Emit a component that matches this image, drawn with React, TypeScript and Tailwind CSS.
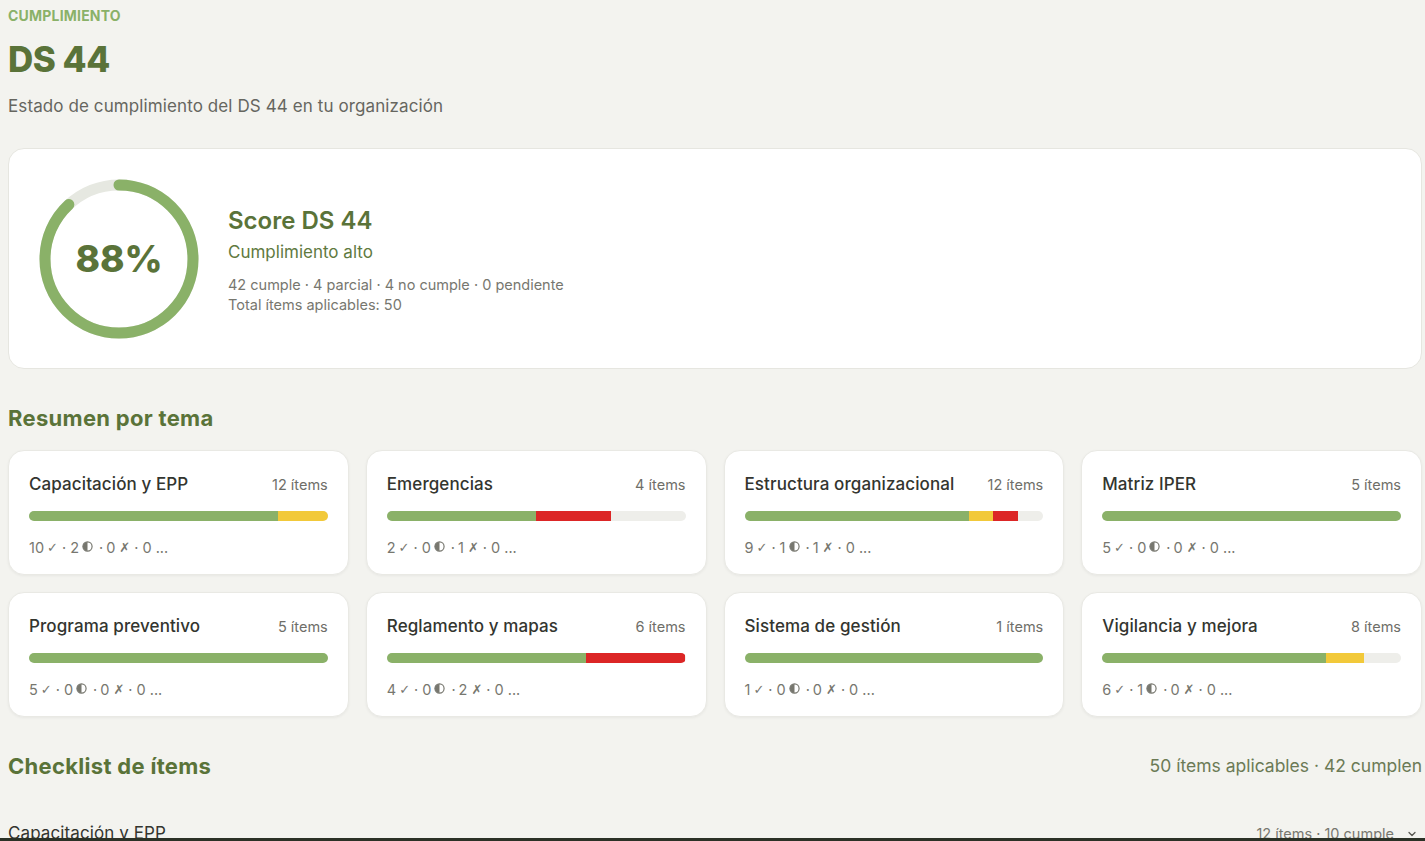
import React from "react";

type Topic = {
  name: string;
  items: number;
  ok: number;
  partial: number;
  no: number;
};

const topics: Topic[] = [
  { name: "Capacitación y EPP", items: 12, ok: 10, partial: 2, no: 0 },
  { name: "Emergencias", items: 4, ok: 2, partial: 0, no: 1 },
  { name: "Estructura organizacional", items: 12, ok: 9, partial: 1, no: 1 },
  { name: "Matriz IPER", items: 5, ok: 5, partial: 0, no: 0 },
  { name: "Programa preventivo", items: 5, ok: 5, partial: 0, no: 0 },
  { name: "Reglamento y mapas", items: 6, ok: 4, partial: 0, no: 2 },
  { name: "Sistema de gestión", items: 1, ok: 1, partial: 0, no: 0 },
  { name: "Vigilancia y mejora", items: 8, ok: 6, partial: 1, no: 0 },
];

function Ring() {
  const r = 74;
  const c = 2 * Math.PI * r;
  const pct = 0.88;
  return (
    <svg width="160" height="160" viewBox="0 0 160 160" className="shrink-0">
      <circle cx="80" cy="80" r={r} fill="none" stroke="#e6e8e1" strokeWidth="11" />
      <circle
        cx="80"
        cy="80"
        r={r}
        fill="none"
        stroke="#8ab168"
        strokeWidth="11"
        strokeLinecap="round"
        strokeDasharray={`${c * pct} ${c}`}
        transform="rotate(-90 80 80)"
      />
      <text
        x="80"
        y="93"
        textAnchor="middle"
        fontSize="37"
        fontWeight="800"
        fill="#5a7339"
        fontFamily="Inter, sans-serif"
      >
        88%
      </text>
    </svg>
  );
}

function HalfCircle() {
  return (
    <svg width="11" height="11" viewBox="0 0 12 12" className="inline-block mx-[3px] -mt-[2px] align-middle">
      <circle cx="6" cy="6" r="5" fill="none" stroke="#77776f" strokeWidth="1.3" />
      <path d="M6 1 A5 5 0 0 0 6 11 Z" fill="#77776f" />
    </svg>
  );
}

function TopicCard({ t }: { t: Topic }) {
  const w = (n: number) => `${(n / t.items) * 100}%`;
  return (
    <div className="bg-white rounded-[16px] border border-[#e9e9e4] shadow-[0_1px_3px_rgba(0,0,0,0.05)] h-[125px] px-[20px] pt-[20px]">
      <div className="flex items-center justify-between h-[26px] mt-[1px]">
        <span className="text-[17px] font-medium text-[#33352f] tracking-[0.1px]">{t.name}</span>
        <span className="text-[14.5px] text-[#6e6e68]">{t.items} ítems</span>
      </div>
      <div className="mt-[13px] h-[10px] rounded-full bg-[#eeeeea] flex overflow-hidden">
        <div className="h-full bg-[#8ab168]" style={{ width: w(t.ok) }} />
        <div className="h-full bg-[#f2c93a]" style={{ width: w(t.partial) }} />
        <div className="h-full bg-[#dc2626]" style={{ width: w(t.no) }} />
      </div>
      <div className="mt-[16px] text-[14.5px] text-[#77776f] flex items-center">
        <span>{t.ok}</span>
        <span className="ml-[3px]" style={{ fontFamily: "'DejaVu Sans', sans-serif", fontSize: "13px" }}>✓</span>
        <span className="mx-[4px]">·</span>
        <span>{t.partial}</span>
        <HalfCircle />
        <span className="mx-[3px]">·</span>
        <span>{t.no}</span>
        <span className="ml-[4px]" style={{ fontFamily: "'DejaVu Sans', sans-serif", fontSize: "13px" }}>✗</span>
        <span className="mx-[4px]">·</span>
        <span>0 ...</span>
      </div>
    </div>
  );
}

export default function App() {
  return (
    <div
      className="bg-[#f3f3ef] pl-[8px] pr-[3px] pt-[7px] overflow-hidden h-[841px]"
      style={{ fontFamily: "Inter, 'Open Sans', sans-serif" }}
    >
      <div className="text-[14px] font-bold text-[#8ab168] tracking-[0.2px] leading-[18px]">CUMPLIMIENTO</div>
      <h1 className="mt-[14px] text-[35px] font-extrabold text-[#5a7339] leading-[40px] tracking-[-0.5px]">DS 44</h1>
      <p className="mt-[15px] text-[17px] text-[#66665f] leading-[24px] tracking-[0.1px]">
        Estado de cumplimiento del DS 44 en tu organización
      </p>

      <div className="mt-[30px] bg-white rounded-[16px] border border-[#e6e6e0] h-[221px] flex items-center pl-[30px]">
        <Ring />
        <div className="ml-[29px] mt-[4px]">
          <div className="text-[24px] font-semibold text-[#5a7339] leading-[30px] tracking-[0px]">Score DS 44</div>
          <div className="mt-[4px] text-[17px] text-[#5f7a3f] leading-[24px] tracking-[0px]">Cumplimiento alto</div>
          <div className="mt-[11px] text-[14.5px] text-[#77776f] leading-[20px] tracking-[0px]">
            42 cumple · 4 parcial · 4 no cumple · 0 pendiente
          </div>
          <div className="text-[14.5px] text-[#77776f] leading-[20px] tracking-[0px]">Total ítems aplicables: 50</div>
        </div>
      </div>

      <h2 className="mt-[34px] text-[22px] font-bold text-[#5a7339] leading-[30px] tracking-[0.3px]">Resumen por tema</h2>

      <div className="mt-[17px] grid grid-cols-4 gap-[17px]">
        {topics.map((t) => (
          <TopicCard key={t.name} t={t} />
        ))}
      </div>

      <div className="mt-[34px] flex items-center justify-between">
        <h2 className="text-[22px] font-bold text-[#5a7339] leading-[30px] tracking-[0.3px]">Checklist de ítems</h2>
        <span className="text-[17.5px] text-[#6b7a55] tracking-[0px]">50 ítems aplicables · 42 cumplen</span>
      </div>

      <div className="mt-[40px] flex items-center justify-between">
        <span className="text-[17px] text-[#33352f] tracking-[0.1px]">Capacitación y EPP</span>
        <span className="flex items-center gap-[12px] text-[14.5px] text-[#77776f] pr-[4px]">
          12 ítems · 10 cumple
          <svg width="12" height="12" viewBox="0 0 24 24" fill="none" stroke="#55554f" strokeWidth="2.5" strokeLinecap="round" strokeLinejoin="round">
            <path d="M6 9l6 6 6-6" />
          </svg>
        </span>
      </div>

      <div className="fixed left-0 right-0 bottom-0 h-[3px] bg-[#2b3126]" />
    </div>
  );
}
